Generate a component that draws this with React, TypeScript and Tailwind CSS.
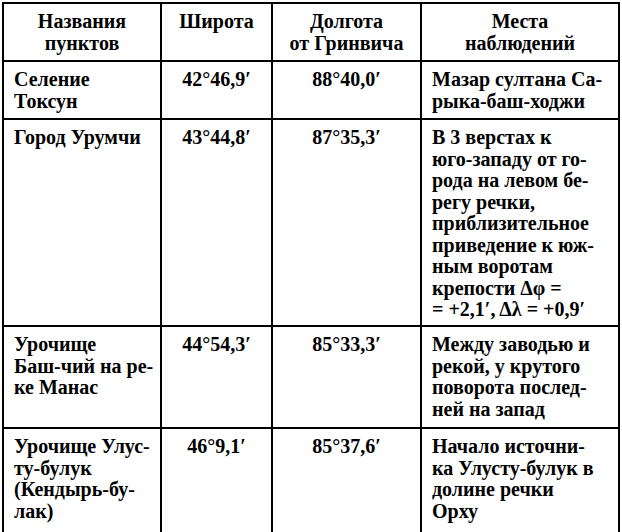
const rows = [
  {
    name: ['Селение', 'Токсун'],
    lat: '42°46,9′',
    lon: '88°40,0′',
    place: ['Мазар султана Са-', 'рыка-баш-ходжи'],
    h: 'h-[58px]',
  },
  {
    name: ['Город Урумчи'],
    lat: '43°44,8′',
    lon: '87°35,3′',
    place: [
      'В 3 верстах к',
      'юго-западу от го-',
      'рода на левом бе-',
      'регу речки,',
      'приблизительное',
      'приведение к юж-',
      'ным воротам',
      'крепости Δφ =',
      '= +2,1′, Δλ = +0,9′',
    ],
    h: 'h-[207px]',
  },
  {
    name: ['Урочище', 'Баш-чий на ре-', 'ке Манас'],
    lat: '44°54,3′',
    lon: '85°33,3′',
    place: ['Между заводью и', 'рекой, у крутого', 'поворота послед-', 'ней на запад'],
    h: 'h-[102px]',
  },
  {
    name: ['Урочище Улус-', 'ту-булук', '(Кендырь-бу-', 'лак)'],
    lat: '46°9,1′',
    lon: '85°37,6′',
    place: ['Начало источни-', 'ка Улусту-булук в', 'долине речки', 'Орху'],
    h: 'h-[140px]',
  },
]

function Text({ items }: { items: string[] }) {
  return (
    <>
      {items.map((t) => (
        <div key={t} className="whitespace-nowrap font-['Liberation_Serif']">
          {t}
        </div>
      ))}
    </>
  )
}

const cell = 'border-r-2 border-b-2 border-black pt-[7px]'

export default function App() {
  return (
    <div className="w-[622px] h-[532px] overflow-hidden bg-white pl-[2px] pt-[2px] text-[20px] font-bold">
      <div className="w-[618px] border-l-2 border-t-2 border-black text-black leading-[21.5px]">
        <div className="grid grid-cols-[158px_111px_149px_198px] h-[58px]">
          <div className={`${cell} text-center`}>
            <Text items={['Названия', 'пунктов']} />
          </div>
          <div className={`${cell} text-center`}>
            <Text items={['Широта']} />
          </div>
          <div className={`${cell} text-center`}>
            <Text items={['Долгота', 'от Гринвича']} />
          </div>
          <div className={`${cell} text-center`}>
            <Text items={['Места', 'наблюдений']} />
          </div>
        </div>
        {rows.map((r, i) => {
          const end = i === rows.length - 1 ? 'border-b-0' : ''
          return (
            <div key={r.lat} className={`grid grid-cols-[158px_111px_149px_198px] ${r.h}`}>
              <div className={`${cell} ${end} pl-[10px]`}>
                <Text items={r.name} />
              </div>
              <div className={`${cell} ${end} text-center`}>
                <Text items={[r.lat]} />
              </div>
              <div className={`${cell} ${end} text-center`}>
                <Text items={[r.lon]} />
              </div>
              <div className={`${cell} ${end} pl-[10px]`}>
                <Text items={r.place} />
              </div>
            </div>
          )
        })}
      </div>
    </div>
  )
}
